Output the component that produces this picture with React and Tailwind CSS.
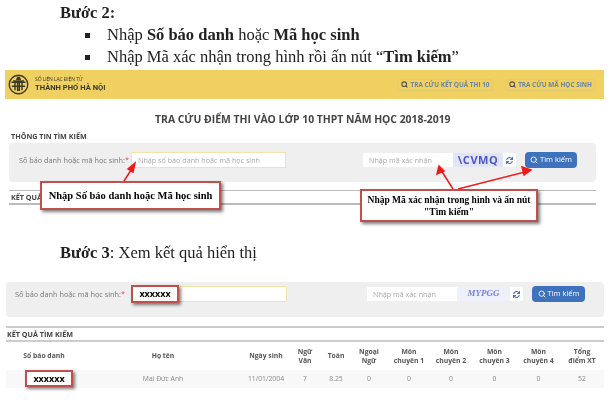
import { Search } from "lucide-react"
import { FaSync } from "react-icons/fa"

const columns = [
  { label: "Số báo danh", value: "" },
  { label: "Họ tên", value: "Mai Đức Anh" },
  { label: "Ngày sinh", value: "11/01/2004" },
  { label: "Ngữ\nVăn", value: "7" },
  { label: "Toán", value: "8.25" },
  { label: "Ngoại\nNgữ", value: "0" },
  { label: "Môn\nchuyên 1", value: "0" },
  { label: "Môn\nchuyên 2", value: "0" },
  { label: "Môn\nchuyên 3", value: "0" },
  { label: "Môn\nchuyên 4", value: "0" },
  { label: "Tổng\nđiểm XT", value: "52" },
]

const Logo = () => (
  <svg width="21" height="21" viewBox="0 0 24 24" fill="none" stroke="#3a3a2a" strokeWidth="1.6">
    <circle cx="12" cy="12" r="10.6" />
    <path d="M4 9.5h16M6 7.5c3 .6 9 .6 12 0M8 9.5v9M16 9.5v9M4.5 14h15M11 9.5h2v9h-2z" />
    <path d="M10 6.5h4l-1-2.5h-2z" fill="#3a3a2a" />
  </svg>
)

const Captcha = ({ text, serif }) => (
  <div className={serif ? "h-full flex-1 flex items-center bg-[#eef0fb]" : "h-full flex-1 flex items-center bg-[#e2e5f8]"}>
    <span
      className={
        serif
          ? "w-full text-center text-[#7a80d8] text-[9px] font-bold italic font-['Liberation_Serif',serif]"
          : "w-full text-center text-[#4a55c8] text-[11px] font-bold tracking-[0.5px]"
      }
    >
      {text}
    </span>
  </div>
)

const SearchPanel = ({ className, labelClass, inputClass, captchaClass, buttonClass, captcha, serif, placeholder }) => (
  <div className={`flex items-start bg-[#efefef] rounded-sm ${className}`}>
    <span className={`h-4 flex items-center text-[7.3px] text-[#777] whitespace-nowrap ${labelClass}`}>
      <span>
        Số báo danh hoặc mã học sinh:<span className="text-[#d9534f]">*</span>
      </span>
    </span>
    <div className={`bg-white border border-[#f3e3a8] h-4 text-[7.2px] text-[#aaa] flex items-center pl-[6px] whitespace-nowrap ${inputClass}`}>
      {placeholder}
    </div>
    <div className={`bg-white mt-[1px] flex items-center h-[14px] text-[7.2px] text-[#aaa] ${captchaClass}`}>
      <span className="w-[90px] pl-[6px] whitespace-nowrap">Nhập mã xác nhận</span>
      <Captcha text={captcha} serif={serif} />
      <div className="w-[13px] flex justify-center">
        <FaSync size={7} className="text-[#4a6fa8]" />
      </div>
    </div>
    <div className={`bg-[#3f72bd] rounded-sm h-4 flex items-center justify-center gap-[2px] text-white text-[7.5px] ${buttonClass}`}>
      <Search size={8} strokeWidth={2.5} />
      Tìm kiếm
    </div>
  </div>
)

const Callout = ({ className, children }) => (
  <div
    className={`absolute bg-white border-2 border-[#c0504d] shadow-[2px_2px_3px_rgba(0,0,0,0.5)] font-['Liberation_Serif',serif] font-bold text-black ${className}`}
  >
    {children}
  </div>
)

const App = () => {
  return (
    <div className="relative w-[611px] h-[402px] overflow-hidden bg-white font-['Open_Sans',sans-serif] blur-[0.5px]">
      {/* huong dan buoc 2 */}
      <div className="h-[70px] pl-[60px] pt-[2px] font-['Liberation_Serif',serif] text-[16.5px] leading-[22px] text-[#222]">
        <p className="font-bold">Bước 2:</p>
        <ul className="pl-[25px]">
          <li className="flex items-center">
            <span className="w-[5px] h-[5px] bg-[#222] mr-[17px]" />
            <span>
              Nhập <b>Số báo danh</b> hoặc <b>Mã học sinh</b>
            </span>
          </li>
          <li className="flex items-center">
            <span className="w-[5px] h-[5px] bg-[#222] mr-[17px]" />
            <span>
              Nhập Mã xác nhận trong hình rồi ấn nút “<b>Tìm kiếm</b>”
            </span>
          </li>
        </ul>
      </div>

      {/* header vang */}
      <header className="ml-[5px] h-[29px] w-[599px] bg-[#efd060] flex items-center justify-between pl-[3px] pr-[8px]">
        <div className="flex items-center gap-[6px]">
          <Logo />
          <div className="text-[#3a3a2a] leading-none">
            <p className="text-[5px] tracking-[-0.1px]">SỔ LIÊN LẠC ĐIỆN TỬ</p>
            <p className="text-[7.6px] font-bold mt-[2px] font-['Roboto',sans-serif]">THÀNH PHỐ HÀ NỘI</p>
          </div>
        </div>
        <div className="flex items-center gap-[11px] text-[6.4px] font-bold text-[#6a86a8] whitespace-nowrap">
          <div className="h-3 w-[97px] flex items-center justify-center gap-[2px] rounded-sm border border-[#e3cb70]">
            <Search size={7} strokeWidth={3.5} className="text-[#555]" />
            TRA CỨU KẾT QUẢ THI 10
          </div>
          <div className="h-3 w-[91px] flex items-center justify-center gap-[2px] rounded-sm border border-[#e3cb70]">
            <Search size={7} strokeWidth={3.5} className="text-[#555]" />
            TRA CỨU MÃ HỌC SINH
          </div>
        </div>
      </header>

      <h1 className="mt-[14px] pl-[155px] text-[10.4px] leading-3 font-bold text-[#444] whitespace-nowrap">
        TRA CỨU ĐIỂM THI VÀO LỚP 10 THPT NĂM HỌC 2018-2019
      </h1>

      {/* man hinh 1 */}
      <p className="mt-[7px] pl-[11px] text-[7.2px] leading-2 font-bold text-[#444]">THÔNG TIN TÌM KIẾM</p>
      <SearchPanel
        className="mt-[3px] ml-[9px] w-[587px] h-[39px] pt-[9px] pl-[10px]"
        labelClass="w-[112px]"
        inputClass="w-[155px]"
        captchaClass="ml-[77px] w-[153px]"
        buttonClass="ml-[9px] w-[52px]"
        captcha="\CVMQ"
        placeholder="Nhập số báo danh hoặc mã học sinh"
      />
      <div className="mt-[8px] ml-[9px] w-[587px] h-[15px] border-y border-y-[#bbb] border-b-2 flex items-center pl-[2px] text-[7.2px] font-bold text-[#444] whitespace-nowrap">
        KẾT QUẢ TÌM KIẾM
      </div>

      {/* buoc 3 */}
      <p className="mt-[39px] pl-[60px] font-['Liberation_Serif',serif] text-[16.5px] leading-[18px] text-[#222]">
        <b>Bước 3</b>: Xem kết quả hiển thị
      </p>

      {/* man hinh 2 */}
      <SearchPanel
        className="mt-[20px] ml-[6px] w-[598px] h-[35px] pt-[4px] pl-[9px]"
        labelClass="w-[116px]"
        inputClass="w-[156px]"
        captchaClass="ml-[80px] w-[156px]"
        buttonClass="ml-[9px] w-[53px]"
        captcha="MYPGG"
        serif
        placeholder=""
      />
      <div className="mt-[9px] ml-[6px] w-[598px] h-[16px] border-y-2 border-y-[#ccc] flex items-center pl-[1px] text-[7.2px] font-bold text-[#444] whitespace-nowrap">
        KẾT QUẢ TÌM KIẾM
      </div>
      <div className="ml-[6px] w-[598px] grid grid-cols-[76px_162px_44px_34px_28px_38px_42px_42px_45px_43px_44px]">
        {columns.map((col) => (
          <div key={col.label} className="h-[28px] flex items-center justify-center text-center text-[6.8px] leading-[9.5px] font-bold text-[#555] whitespace-pre-line">
            {col.label}
          </div>
        ))}
        {columns.map((col) => (
          <div key={col.label} className="h-[18px] bg-[#f8f8f8] flex items-center justify-center text-[6.8px] text-[#888]">
            {col.value}
          </div>
        ))}
      </div>

      {/* chu thich do */}
      <svg className="absolute left-0 top-0" width="611" height="402" fill="none" stroke="#f01a1a" strokeWidth="1.5">
        <path d="M124 181 L133 167" />
        <path d="M135 163 L128 169 L133 172 Z" fill="#f01a1a" />
        <path d="M453 189 L441 170" />
        <path d="M439 166 L437 174 L444 171 Z" fill="#f01a1a" />
        <path d="M458 189 L525 172" />
        <path d="M531 170 L522 167 L524 175 Z" fill="#f01a1a" />
      </svg>
      <Callout className="left-[40px] top-[181px] w-[181px] h-[29px] flex items-center justify-center text-[10.5px] whitespace-nowrap">
        Nhập Số báo danh hoặc Mã học sinh
      </Callout>
      <Callout className="left-[360px] top-[189px] w-[178px] h-[33px] flex items-center justify-center text-center text-[9.5px] leading-[12px]">
        Nhập Mã xác nhận trong hình và ấn nút "Tìm kiếm"
      </Callout>
      <Callout className="left-[131px] top-[285px] w-[48px] h-[18px] flex items-center justify-center text-[9px] font-['Open_Sans',sans-serif]">
        xxxxxx
      </Callout>
      <Callout className="left-[25px] top-[370px] w-[48px] h-[17px] flex items-center justify-center text-[9px] font-['Open_Sans',sans-serif]">
        xxxxxx
      </Callout>
    </div>
  )
}

export default App
